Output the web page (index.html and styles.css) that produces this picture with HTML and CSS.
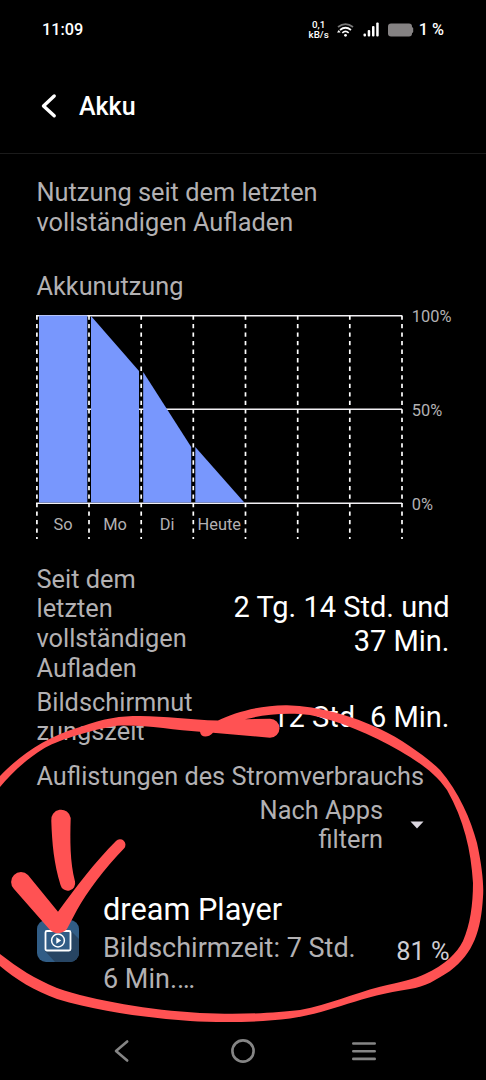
FILE: index.html
```
<!DOCTYPE html>
<html lang="de">
<head>
  <meta charset="UTF-8">
  <title>Akku</title>
  <meta name="viewport" content="width=device-width, initial-scale=1.0">
  <link rel="stylesheet" href="styles.css">
</head>
<body>
  <div class="statusbar">
    <span class="time">11:09</span>
    <div class="status-icons">
      <span class="speed">0,1<br>kB/s</span>
      <svg class="wifi" width="17" height="14" viewBox="0 0 17 14" fill="none" stroke="#fff" stroke-width="1.700">
        <path d="M1 4 Q8.500 -1.800 16 4" stroke="#777"/>
        <path d="M3 7 Q8.500 2.500 14 7"/>
        <path d="M5.300 9.800 Q8.500 7 11.700 9.800"/>
        <circle cx="8.500" cy="12.300" r="1.400" fill="#fff" stroke="none"/>
        <path d="M0 9.500 L1.800 7 L3.600 9.500 Z" fill="#fff" stroke="none"/>
      </svg>
      <svg class="signal" width="17" height="15" viewBox="0 0 17 15" fill="#fff">
        <rect x="0.500" y="11.500" width="2.500" height="3" rx="1"/>
        <rect x="4.700" y="8" width="2.500" height="6.500" rx="1"/>
        <rect x="9" y="4" width="2.500" height="10.500" rx="1"/>
        <rect x="13.200" y="0.500" width="2.500" height="14" rx="1"/>
      </svg>
      <svg class="battery" width="26" height="14" viewBox="0 0 26 14" fill="#858283">
        <rect x="0" y="0.500" width="24" height="13" rx="3"/>
        <rect x="22" y="4" width="3.200" height="6" rx="1.500"/>
      </svg>
      <span class="percent">1 %</span>
    </div>
  </div>

  <header>
    <svg width="16" height="26" viewBox="0 0 16 26" fill="none" stroke="#fff" stroke-width="3.400" stroke-linecap="round" stroke-linejoin="round">
      <path d="M13.200 3 L2.500 12.900 L13.200 22.800"/>
    </svg>
    <h1>Akku</h1>
  </header>

  <main>
    <p class="intro">Nutzung seit dem letzten vollständigen Aufladen</p>
    <h2 class="chart-title">Akkunutzung</h2>

    <svg class="chart" width="429" height="232" viewBox="0 0 429 232">
      <g stroke="#f2f0f4" stroke-width="1.600">
        <path d="M0 8.700 H366"/>
        <path d="M0 102.300 H366"/>
        <path d="M0 196.200 H366"/>
      </g>
      <g fill="#7897fd">
        <rect x="3" y="8.500" width="48.300" height="187"/>
        <path d="M55 9 L103 64 V195.500 H55 Z"/>
        <path d="M107.200 65 L155.200 140 V195.500 H107.200 Z"/>
        <path d="M159.300 140 L208.300 195.500 H159.300 Z"/>
      </g>
      <g stroke="#fff" stroke-width="1.700" stroke-dasharray="4.300 4.220">
        <path d="M0.900 8.500 V232"/>
        <path d="M53 8.500 V232"/>
        <path d="M105.200 8.500 V232"/>
        <path d="M157.300 8.500 V232"/>
        <path d="M209.500 8.500 V232"/>
        <path d="M261.700 8.500 V232"/>
        <path d="M313.800 8.500 V232"/>
        <path d="M366 8.500 V232"/>
      </g>
      <g class="chart-days">
        <text x="27" y="222.500">So</text>
        <text x="79" y="222.500">Mo</text>
        <text x="131.200" y="222.500">Di</text>
        <text x="183.300" y="222.500">Heute</text>
      </g>
      <g class="chart-scale">
        <text x="375.800" y="15">100%</text>
        <text x="375.800" y="108.700">50%</text>
        <text x="375.800" y="202.500">0%</text>
      </g>
    </svg>

    <div class="row">
      <div class="label">Seit dem letzten vollständigen Aufladen</div>
      <div class="value">2 Tg. 14 Std. und 37 Min.</div>
    </div>
    <div class="row">
      <div class="label">Bildschirmnutzungszeit</div>
      <div class="value">12 Std. 6 Min.</div>
    </div>

    <h2 class="list-title">Auflistungen des Stromverbrauchs</h2>
    <div class="filter">
      <span>Nach Apps filtern</span>
      <svg width="14" height="8" viewBox="0 0 14 8"><path d="M0.500 0.500 H13.500 L7 7.500 Z" fill="#dcd8e0"/></svg>
    </div>

    <div class="app">
      <svg class="app-icon" width="42" height="42" viewBox="0 0 42 42">
        <clipPath id="tile"><rect width="42" height="42" rx="9"/></clipPath>
        <g clip-path="url(#tile)">
          <rect width="42" height="42" fill="#315d86"/>
          <path d="M34 11 L42 19 V42 H18 L8 31 Z" fill="#274563"/>
        </g>
        <rect x="8.500" y="11" width="25" height="19.500" rx="1.500" fill="#315d86" stroke="#fff" stroke-width="1.800"/>
        <circle cx="21" cy="20.500" r="6.400" fill="none" stroke="#fff" stroke-width="1.500"/>
        <path d="M19.300 17.300 L24.200 20.500 L19.300 23.700 Z" fill="#fff"/>
      </svg>
      <div class="app-info">
        <div class="app-name">dream Player</div>
        <div class="app-time">Bildschirmzeit: 7 Std. 6 Min.…</div>
      </div>
      <div class="app-percent">81 %</div>
    </div>
  </main>

  <nav>
    <svg width="24" height="24" viewBox="0 0 24 24"><path d="M17.200 2.500 L6 12 L17.200 21.500"/></svg>
    <svg width="24" height="24" viewBox="0 0 24 24"><circle cx="12" cy="12" r="10.600"/></svg>
    <svg width="24" height="24" viewBox="0 0 24 24"><path d="M1.300 4.500 H22.700 M1.300 12.200 H22.700 M1.300 19.900 H22.700"/></svg>
  </nav>

  <!-- red marker -->
  <svg class="marker" width="486" height="1080" viewBox="0 0 486 1080">
    <path d="M0 776 C18 757 45 737 80 727 C105 718 120 716 140 716 C165 716 190 720 218 720.500 C235 712 262 705 287 705.300 C320 706 352 716 380 729 C404 740 430 760 440 770 C459 792 471 820 477 843 C482 866 484 885 483 897 C481 930 474 953 450 971 C436 980 425 987 410 989 C360 996 330 1013 290 1018.500 C255 1023 215 1022.500 190 1021 C150 1018 100 1012 57 999 C35 991 15 979 0 966 L0 954 C18 968 35 979 57 988 C95 1001 150 1010 200 1013 C240 1015 275 1013 300 1010 C330 1004 352 994 380 986.700 C400 982 415 979 425 974 C445 965 457 953 463 941 C470 925 473 905 473 883 C471 850 464 820 447 790 C434 771 415 760 400 751 C370 734 340 721 310 715 C285 712 262 715 245 719.300 L270 718.700 A9.500 9.500 0 0 1 270 737.700 L213 732.700 C208 738 201 738 200 731.700 C175 730 140 724 117 725.700 C90 730 55 741 43 749 C25 760 10 775 0 787 Z"/>
    <path d="M51.300 821 A9.700 9.700 0 0 1 70.700 818 C70 840 70 862 75 881.500 A7.400 7.400 0 0 1 60.500 885 C54 864 52 843 51.300 821 Z"/>
    <path d="M28 875 L58 911.700 C76 887 95 862 116 841 A5.400 5.400 0 0 1 124 848.500 C105 868 87 892 77 910 L68 927 C65 934 55 935 50 930 L14 889 A9.700 9.700 0 0 1 28 875 Z"/>
  </svg>
</body>
</html>
```
FILE: styles.css
```
* {
  margin: 0;
  padding: 0;
  box-sizing: border-box;
}

body {
  position: relative;
  display: flex;
  flex-direction: column;
  height: 1080px;
  overflow: hidden;
  background-color: #000;
  color: #fff;
  font-family: Roboto, sans-serif;
  font-feature-settings: "liga" 1;
}

svg {
  display: block;
  flex-shrink: 0;
}

h1, h2 {
  font-weight: 400;
}

.statusbar {
  display: flex;
  align-items: center;
  justify-content: space-between;
  height: 59px;
  padding: 0 42px;
}

.time, .percent {
  font-size: 16.3px;
  font-weight: 500;
}

.status-icons {
  display: flex;
  align-items: center;
}

.speed {
  font-size: 9.8px;
  line-height: 9.3px;
  font-weight: 500;
  text-align: center;
}

.wifi {
  margin-left: 8px;
}

.signal {
  margin-left: 9px;
}

.battery {
  margin-left: 8px;
}

.percent {
  margin-left: 5px;
}

header {
  display: flex;
  align-items: center;
  height: 95px;
  padding-left: 41px;
  border-bottom: 1px solid #1b1b1b;
}

header h1 {
  margin-left: 22px;
  font-size: 25px;
  font-weight: 500;
}

main {
  flex: 1;
  padding: 24.4px 36.5px 0;
  color: #b3b1b3;
  font-size: 25.35px;
  line-height: 29.7px;
}

.intro {
  width: 320px;
}

.chart-title, .list-title {
  font-size: 25.3px;
}

.chart-title {
  margin-top: 34.6px;
}

.chart {
  margin-top: 4.6px;
  margin-left: -0.5px;
}

.chart text {
  font-size: 16.4px;
  fill: #b3b1b3;
}

.chart-days text {
  text-anchor: middle;
}

.row {
  display: flex;
  align-items: center;
  justify-content: space-between;
  margin-top: 4px;
}

.chart + .row {
  margin-top: 26px;
}

.label {
  width: 160px;
  overflow-wrap: anywhere;
}

.value {
  width: 230px;
  color: #fff;
  font-size: 29px;
  line-height: 34px;
  text-align: right;
}

.list-title {
  margin-top: 15px;
  white-space: nowrap;
}

.filter {
  display: flex;
  align-items: center;
  justify-content: flex-end;
  margin-top: 4px;
  padding-right: 26px;
}

.filter span {
  width: 140px;
  margin-right: 26.5px;
  text-align: right;
}

.app {
  display: flex;
  align-items: flex-end;
  margin-top: 36.5px;
}

.app-icon {
  margin-left: 0.5px;
  margin-bottom: 34px;
}

.app-info {
  width: 265px;
  margin-left: 24px;
}

.app-name {
  color: #fff;
  font-size: 30.7px;
  line-height: 36px;
}

.app-time {
  margin-top: 5px;
  font-size: 27px;
  line-height: 31.8px;
}

.app-percent {
  margin-left: auto;
  margin-bottom: 29px;
  color: #cfcdd2;
  white-space: nowrap;
}

nav {
  display: flex;
  justify-content: center;
  gap: 97px;
  height: 41px;
}

nav svg {
  fill: none;
  stroke: #858585;
  stroke-width: 2.6px;
  stroke-linecap: round;
  stroke-linejoin: round;
}

.marker {
  position: absolute;
  top: 0;
  left: 0;
  fill: #ff5253;
  pointer-events: none;
}
```
